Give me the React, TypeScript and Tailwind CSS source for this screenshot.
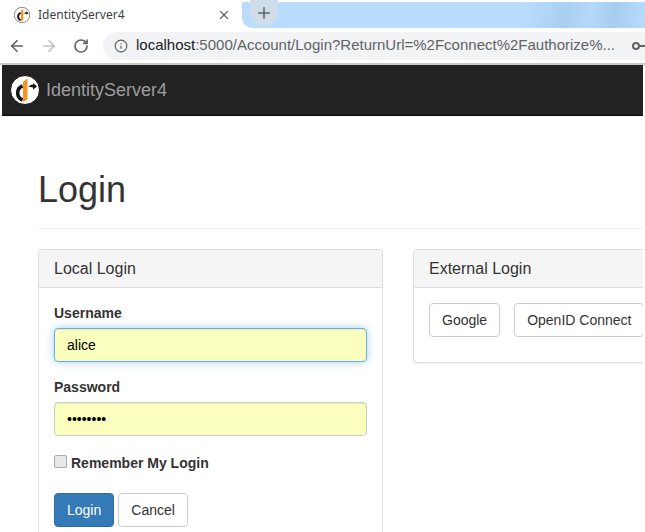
import { ArrowLeft, ArrowRight, Info, Plus, RotateCw, X } from "lucide-react";

function Logo({ size, ring }: { size: number; ring: string }) {
  return (
    <svg width={size} height={size} viewBox="0 0 30 30" className="shrink-0">
      <circle cx="15" cy="15" r="14.500" fill="#fff" stroke={ring} strokeWidth="1" />
      <path d="M12.500 11a7.500 7.500 0 0 0 0 14" fill="none" stroke="#111" strokeWidth="3.500" />
      <path d="M13 7l4.500-3.500v21L13 27z" fill="#f7931e" />
      <path d="M18.500 12c1.500-2 3-2.500 4.500-2.200V8l4 3.600-4 3v-2c-1.600-.6-3-.6-4.500-.6z" fill="#111" />
    </svg>
  );
}

function Panel({ title, children }: { title: string; children: React.ReactNode }) {
  return (
    <div className="w-[345px] shrink-0 rounded-[4px] border border-[#ddd] bg-white shadow-[0_1px_1px_rgba(0,0,0,0.05)]">
      <div className="h-[38px] rounded-t-[3px] border-b border-[#ddd] bg-[#f5f5f5] px-[15px] pt-[9px] text-[16px] leading-[20px]">
        {title}
      </div>
      {children}
    </div>
  );
}

function Field({ label, value, focused }: { label: string; value: string; focused?: boolean }) {
  return (
    <div className="mb-[15px]">
      <div className="mb-[5px] text-[14px] font-bold leading-[20px]">{label}</div>
      <div
        className={`flex h-[34px] items-center rounded-[4px] border bg-[#faffbd] px-[12px] text-[14px] text-black ${
          focused
            ? "border-[#66afe9] shadow-[inset_0_1px_1px_rgba(0,0,0,0.075),0_0_8px_rgba(102,175,233,0.6)]"
            : "border-[#ccc] shadow-[inset_0_1px_1px_rgba(0,0,0,0.075)]"
        }`}
      >
        {value}
      </div>
    </div>
  );
}

export default function App() {
  return (
    <div className="h-[532px] w-[645px] overflow-hidden bg-white font-['Liberation_Sans',sans-serif] text-[#333]">
      {/* browser chrome */}
      <div className="flex h-[28px] pt-[2px]">
        <div className="flex w-[242px] items-center pl-[14px] pr-[11px] text-[#3c4043]">
          <Logo size={16} ring="#222" />
          <span className="ml-[8px] flex-1 font-['Noto_Sans',sans-serif] text-[12px]">IdentityServer4</span>
          <X size={14} strokeWidth={2} className="text-[#5f6368]" />
        </div>
        <div className="flex flex-1 items-center rounded-bl-[10px] bg-[linear-gradient(100deg,#b9dcfd_0%,#b9dcfd_70%,#a9cfef_80%,#b5d9f9_86%,#a6cdee_92%,#b9dcfd_100%)] pl-[8px]">
          <div className="flex h-[26px] w-[28px] -translate-y-[2px] items-center justify-center rounded-b-full bg-[#cfdcea] text-[#5f6368]">
            <Plus size={18} strokeWidth={2} />
          </div>
        </div>
      </div>
      <div className="flex h-[35px] items-center pl-[8px] text-[#5f6368]">
        <ArrowLeft size={18} strokeWidth={2.25} className="shrink-0" />
        <ArrowRight size={18} strokeWidth={2.25} className="ml-[14px] shrink-0 text-[#bdc1c6]" />
        <RotateCw size={16} strokeWidth={2.5} className="ml-[15px] shrink-0" />
        <div className="ml-[14px] flex h-[28px] min-w-0 flex-1 items-center rounded-l-full bg-[#f1f3f4] pl-[11px] text-[15px]">
          <Info size={14} strokeWidth={2} className="shrink-0" />
          <span className="ml-[8px] whitespace-nowrap">
            <span className="text-[#202124]">localhost</span>:5000/Account/Login?ReturnUrl=%2Fconnect%2Fauthorize%...
          </span>
          <svg width="16" height="10" viewBox="0 0 16 10" className="ml-[17px] shrink-0">
            <circle cx="4" cy="5" r="3" fill="none" stroke="#5f6368" strokeWidth="2" />
            <path d="M7 4h9v2h-1v2h-2V6H7z" fill="#5f6368" />
          </svg>
        </div>
      </div>
      <div className="h-[2px] bg-[#c9c9c9]" />

      <div className="mx-[2px]">
        {/* navbar */}
        <div className="flex h-[51px] items-center border-b border-[#080808] bg-[#222] pl-[8px]">
          <Logo size={30} ring="#111" />
          <span className="ml-[6px] text-[18px] text-[#9d9d9d]">IdentityServer4</span>
        </div>

        <div className="overflow-hidden pl-[36px]">
          <div className="mt-[54px] h-[59px] border-b border-[#eee] text-[36px] leading-[40px]">Login</div>

          <div className="mt-[20px] flex items-start gap-[30px]">
            <Panel title="Local Login">
              <div className="p-[15px]">
                <Field label="Username" value="alice" focused />
                <Field label="Password" value="••••••••" />
                <label className="mb-[20px] mt-[17px] flex h-[20px] items-center text-[14px] font-bold">
                  <input
                    type="checkbox"
                    className="mr-[4px] h-[13px] w-[13px] -translate-y-[2px] appearance-none rounded-[2px] border border-[#aaa] bg-[#e8e8e8]"
                  />
                  Remember My Login
                </label>
                <div className="flex gap-[4px] text-[14px]">
                  <div className="flex h-[34px] items-center rounded-[4px] border border-[#2e6da4] bg-[#337ab7] px-[12px] text-white">
                    Login
                  </div>
                  <div className="flex h-[34px] items-center rounded-[4px] border border-[#ccc] bg-white px-[12px]">
                    Cancel
                  </div>
                </div>
              </div>
            </Panel>
            <Panel title="External Login">
              <div className="flex gap-[14px] px-[15px] pb-[25px] pt-[15px] text-[14px]">
                <div className="flex h-[34px] items-center rounded-[4px] border border-[#ccc] px-[12px]">Google</div>
                <div className="flex h-[34px] items-center rounded-[4px] border border-[#ccc] px-[12px]">OpenID Connect</div>
              </div>
            </Panel>
          </div>
        </div>
      </div>
    </div>
  );
}
